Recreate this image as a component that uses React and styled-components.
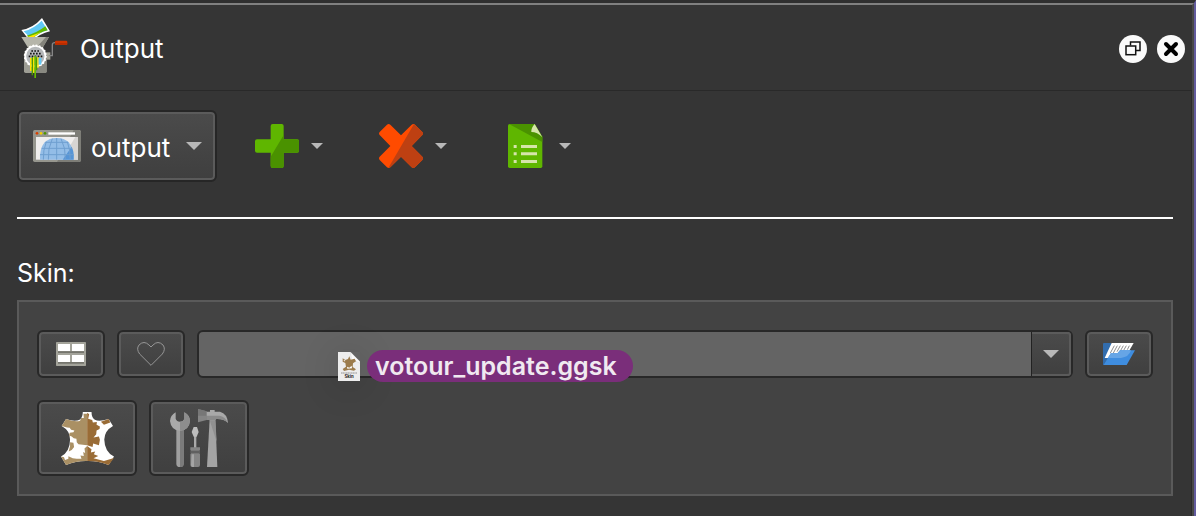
import React, { useState } from "react";
import styled, { createGlobalStyle } from "styled-components";

const GrinderIcon = () => (
  <svg width="48" height="61" viewBox="60 54 144 183" aria-hidden="true">
    <path d="M64 90 Q100 84 126 54 L150 94 Q120 100 92 126 Z" fill="#fff" />
    <path d="M71 94 Q102 86 125 62 L143 91 Q118 97 95 118 Z" fill="#60c8f5" />
    <path d="M80 107 Q112 98 136 79 L143 91 Q116 97 95 118 Z" fill="#64b900" />
    <path d="M84 110 Q104 104 124 96 Q108 104 95 118 Z" fill="#ffe600" />
    <rect x="136" y="157" width="15" height="22" fill="#a3a398" />
    <path d="M146 167 H157 V134 Q157 128 165 128" fill="none" stroke="#858585" strokeWidth="4" />
    <rect x="165" y="122" width="37" height="13" rx="4" fill="#cf3300" />
    <rect x="165" y="129" width="37" height="6" rx="3" fill="#b92d00" />
    <path d="M72 158 H140 V214 Q140 219 135 219 H77 Q72 219 72 214 Z" fill="#9d9d94" />
    <path d="M106 158 H140 V214 Q140 219 135 219 H106 Z" fill="#898981" />
    <path d="M64 111 H147 L126 146 H86 Z" fill="#b5b5aa" />
    <path d="M138 111 H147 L126 146 H106 Z" fill="#83837b" />
    <circle cx="106" cy="168" r="30" fill="#b5b8ba" stroke="#fff" strokeWidth="5" />
    <circle cx="106" cy="168" r="32" fill="none" stroke="#fff" strokeWidth="5" strokeDasharray="5 5.05" />
    <g stroke="#151515" strokeWidth="5" strokeDasharray="5 4">
      <path d="M94 153 H119" />
      <path d="M90 161 H124" />
      <path d="M86 169 H128" />
    </g>
    <path d="M90 174 H95 V213 H90 Z" fill="#ffe600" />
    <path d="M95 172 H99 V226 H95 Z" fill="#4d9a00" />
    <path d="M99 172 H103 V218 H99 Z" fill="#ffe600" />
    <path d="M103 167 H108 V234 H103 Z" fill="#64b900" />
    <path d="M108 172 H112 V211 H108 Z" fill="#4d9a00" />
    <path d="M112 172 H116 V203 H112 Z" fill="#ffe600" />
    <path d="M116 174 H124 V194 H116 Z" fill="#60c8f5" />
  </svg>
);

const FloatIcon = () => (
  <svg width="16" height="15" viewBox="0 0 16 15" fill="none" stroke="#111" strokeWidth="1.5" aria-hidden="true">
    <path d="M5.5 4.5 V1 H15 V9.5 H11" />
    <rect x="1" y="5" width="9.7" height="8.7" />
  </svg>
);

const CloseIcon = () => (
  <svg width="16" height="16" viewBox="0 0 16 16" fill="none" stroke="#000" strokeWidth="4" strokeLinecap="round" aria-hidden="true">
    <path d="M3 3 L13 13 M13 3 L3 13" />
  </svg>
);

const WebIcon = () => (
  <svg width="48" height="32" viewBox="0 0 144 96" aria-hidden="true">
    <rect width="144" height="96" rx="5" fill="#96968e" />
    <path d="M139 0 L144 5 V91 L139 96 H72 L122 0 Z" fill="#7d7d77" />
    <rect x="9" y="21" width="126" height="68" fill="#f0eeed" />
    <path d="M135 21 V89 H86 L127 21 Z" fill="#d7d5d3" />
    <path d="M21 89 V76 Q25 24 71 24 Q117 24 122 76 V89 Z" fill="#93bde7" />
    <path d="M116 50 Q122 62 122 76 V89 H89 Z" fill="#5795d6" />
    <g fill="none" stroke="#6f9fd0" strokeWidth="3">
      <path d="M71 24 V89 M26 55 H117 M21 74 H122 M37 37 H106" />
      <path d="M58 26 Q44 55 46 89 M84 26 Q99 55 97 89 M40 35 Q30 60 31 89 M103 35 Q112 60 112 89" />
    </g>
    <path d="M46 7 H126 V14 H46 Z" fill="#fff" />
    <circle cx="12" cy="10" r="4" fill="#d83f00" />
    <circle cx="24" cy="10" r="4" fill="#f3cf00" />
    <circle cx="36" cy="10" r="4" fill="#4d9500" />
  </svg>
);

const AddIcon = () => (
  <svg width="44" height="44" viewBox="0 0 132 132" aria-hidden="true">
    <path
      d="M53 0 H80 Q86 0 86 6 V46 H126 Q132 46 132 52 V80 Q132 86 126 86 H86 V126 Q86 132 80 132 H53 Q47 132 47 126 V86 H6 Q0 86 0 80 V52 Q0 46 6 46 H47 V6 Q47 0 53 0 Z"
      fill="#5fb600"
    />
    <path d="M86 33 V46 H126 Q132 46 132 52 V80 Q132 86 126 86 H86 V126 Q86 132 80 132 H53 Q47 132 47 126 V98 Z" fill="#4a9200" />
  </svg>
);

const RemoveIcon = () => (
  <svg width="44" height="44" viewBox="0 0 132 132" aria-hidden="true">
    <path
      d="M2 24 L24 2 Q29 -2 34 2 L66 34 L98 2 Q103 -2 108 2 L130 24 Q134 28 130 33 L98 66 L130 98 Q134 103 130 108 L108 130 Q103 134 98 130 L66 98 L34 130 Q29 134 24 130 L2 108 Q-2 103 2 98 L34 66 L2 33 Q-2 28 2 24 Z"
      fill="#ff4b00"
    />
    <path d="M105 0 L130 24 Q134 28 130 33 L98 66 L130 98 Q134 103 130 108 L108 130 Q103 134 98 130 L66 98 L34 130 L28 132 Z" fill="#be4012" />
  </svg>
);

const TemplateIcon = () => (
  <svg width="44" height="44" viewBox="-15 0 132 132" aria-hidden="true">
    <path d="M5 0 H80 L103 38 V127 Q103 132 98 132 H5 Q0 132 0 127 V5 Q0 0 5 0 Z" fill="#5fb600" />
    <path d="M3 0 H80 L103 38 V54 Z" fill="#4a9200" />
    <path d="M80 0 L103 40 Q88 24 70 24 Q69 12 80 0 Z" fill="#d6e5aa" />
    <g fill="#d6e5aa">
      <path d="M17 63 H26 V72 H17 Z M39 63 H87 V72 H39 Z" />
      <path d="M17 85 H26 V94 H17 Z M39 85 H87 V94 H39 Z" />
      <path d="M17 108 H26 V117 H17 Z M39 108 H87 V117 H39 Z" />
    </g>
  </svg>
);

const GridIcon = () => (
  <svg width="30" height="24" viewBox="0 0 90 72" aria-hidden="true">
    <rect width="90" height="72" rx="2" fill="#a3a39a" />
    <path d="M6 28 H84 V33 H6 Z M6 60 H84 V65 H6 Z" fill="#75756d" />
    <path d="M6 6 H42 V27 H6 Z M48 6 H84 V27 H48 Z M6 39 H42 V60 H6 Z M48 39 H84 V60 H48 Z" fill="#fff" />
  </svg>
);

const HeartIcon = () => (
  <svg width="28" height="24" viewBox="0 0 84 72" fill="none" stroke="#969696" strokeWidth="3" aria-hidden="true">
    <path d="M42 70 L8 36 Q-3 21 6 9 Q21 -6 36 9 L42 15 L48 9 Q63 -6 78 9 Q87 21 76 36 Z" />
  </svg>
);

const FolderIcon = () => (
  <svg width="32" height="22" viewBox="0 0 96 66" aria-hidden="true">
    <path d="M0 2 Q0 0 3 0 H23 L28 6 V50 L4 66 H0 Z" fill="#326dae" />
    <path d="M26 0 H92 L66 45 H5 Z" fill="#fff" />
    <g stroke="#777" strokeWidth="2.5">
      <path d="M34 8 L22 30 M43 8 L31 30 M52 8 L42 26 M61 8 L52 24 M70 8 L62 22 M79 8 L73 20" />
    </g>
    <path d="M24 30 H44 L51 22 H96 L71 66 H2 Z" fill="#3f8ddf" />
    <path d="M24 30 H44 L51 22 H84 Q78 42 54 45 H14 Z" fill="#66a5e6" />
  </svg>
);

const hide = "M15 21 Q42 31 57 22 Q65 15 65 0 H91 Q91 17 101 23 Q113 30 142 21 L155 42 Q130 56 129 82 Q130 119 158 133 L142 158 Q110 145 78 146 Q46 145 15 158 L0 133 Q27 118 27 82 Q27 56 2 42 Z";

const HideIcon = () => (
  <svg width="53" height="53" viewBox="0 0 158 158" aria-hidden="true">
    <path d={hide} fill="#fff" />
    <path d="M15 21 Q43 31 57 26 L60 18 L68 18 L67 5 H78 V99 L65 98 L52 96 L47 90 L46 80 L38 78 L32 73 L24 70 L26 62 L37 60 L40 55 L30 53 L26 47 L18 46 L2 42 Z" fill="#aa9064" />
    <path d="M27 90 L37 92 L39 104 L32 113 L23 118 L27 101 Z" fill="#aa9064" />
    <path d="M0 133 L9 135 L12 143 L22 139 L22 132 L35 138 L47 139 L61 139 L58 130 L68 131 L66 119 L72 122 L70 109 L78 101 V146 Q46 145 15 158 Z" fill="#aa9064" />
    <path d="M78 2 L84 7 L81 20 L93 24 L95 31 L107 30 L106 38 L116 43 L115 51 L106 55 L105 66 L97 76 L113 73 L116 83 L113 99 L96 94 L94 104 L78 99 Z" fill="#9a6c36" />
    <path d="M78 101 L91 111 L89 121 L102 118 L98 126 L111 131 L97 138 L128 146 L158 137 L142 158 Q110 145 78 146 Z" fill="#9a6c36" />
    <path d="M119 29 L142 21 L147 31 L128 38 Z" fill="#9a6c36" />
  </svg>
);

const ToolsIcon = () => (
  <svg width="58" height="58" viewBox="0 0 174 174" aria-hidden="true">
    <path d="M19 52 H41 V164 Q41 174 30 174 Q19 174 19 164 Z" fill="#9f9f9f" />
    <path d="M30 52 H41 V164 Q41 174 30 174 Z" fill="#7b7b7b" />
    <path d="M17 10 V29 Q20 38 30 38 Q40 38 43 29 V10 Q60 20 60 36 Q57 64 30 65 Q3 64 0 36 Q1 19 17 10 Z" fill="#aaa" />
    <path d="M43 10 Q60 20 60 36 Q57 64 30 65 V38 Q40 38 43 29 Z" fill="#8d8d8d" />
    <path d="M72 78 H79 V117 H72 Z" fill="#aaa" />
    <path d="M71 54 H81 L86 69 L80 83 H71 L65 69 Z" fill="#bdbdbd" />
    <path d="M61 115 H90 V123 Q84 128 90 136 V168 Q90 174 84 174 H67 Q61 174 61 168 V136 Q67 128 61 123 Z" fill="#858585" />
    <path d="M61 125 H90 V133 H61 Z" fill="#606060" />
    <path d="M65 136 H72 V174 H67 Q63 173 63 168 Z" fill="#a5a5a5" />
    <path d="M119 30 H136 L142 174 H111 Z" fill="#a4a4a4" />
    <path d="M119 34 H136 L140 98 Z" fill="#919191" />
    <path d="M84 0 L110 7 V33 L84 40 Z" fill="#858585" />
    <path d="M84 0 L110 7 V20 H84 Z" fill="#777" />
    <path d="M110 8 H120 V3 H134 V8 H150 Q172 14 174 42 Q162 29 139 30 L134 33 H110 Z" fill="#a9a9a9" />
    <path d="M110 20 H148 Q166 23 174 42 Q162 29 139 30 L134 33 H110 Z" fill="#8b8b8b" />
  </svg>
);

const SkinFileIcon = () => (
  <svg width="22" height="29" viewBox="0 0 66 87" aria-hidden="true">
    <path d="M0 0 H37 L66 29 V87 H0 Z" fill="#ededed" />
    <path d="M37 0 Q42 20 39 27 Q54 24 66 34 V29 Z" fill="#fafafa" stroke="#ccc" strokeWidth="1" />
    <path d="M14 19 L22 24 L30 21 L34 13 L38 23 L50 20 L54 28 L45 34 L44 45 L54 52 L48 56 L33 53 L18 57 L14 51 L24 44 L22 33 L14 29 Z" fill="#9b7b4b" />
    <path d="M27 44 L34 47 L41 41 L42 49 L28 50 Z M17 23 L23 27 L18 28 Z" fill="#fff" />
    <path d="M9 63 H57" stroke="#666" strokeWidth="2" strokeDasharray="4 1" />
    <text x="33" y="79" textAnchor="middle" fontFamily="Inter, sans-serif" fontSize="13" fontWeight="700" fill="#222">Skin</text>
  </svg>
);

const Caret = ({ size = 12 }) => (
  <svg width={size} height={size / 2} viewBox="0 0 12 6" aria-hidden="true">
    <path d="M0 0 H12 L6 6 Z" fill="#b8b8b8" />
  </svg>
);

const App = () => {
  const [skin, setSkin] = useState("");

  return (
    <Frame>
      <GlobalStyle />
      <Dock>
        <Header>
          <GrinderIcon />
          <Title>Output</Title>
          <RoundButton aria-label="Float panel"><FloatIcon /></RoundButton>
          <RoundButton aria-label="Close panel"><CloseIcon /></RoundButton>
        </Header>
        <Content>
          <Toolbar>
            <OutputPicker>
              <WebIcon />
              <select name="output" aria-label="Output format" defaultValue="output">
                <option value="output">output</option>
              </select>
              <Caret size={16} />
            </OutputPicker>
            <ToolButton aria-label="Add output"><AddIcon /><Caret /></ToolButton>
            <ToolButton aria-label="Remove output"><RemoveIcon /><Caret /></ToolButton>
            <ToolButton aria-label="Templates"><TemplateIcon /><Caret /></ToolButton>
          </Toolbar>
          <Divider />
          <Label htmlFor="skin">Skin:</Label>
          <Panel>
            <Row>
              <FrameButton aria-label="Browse skins"><GridIcon /></FrameButton>
              <FrameButton aria-label="Favourite skins"><HeartIcon /></FrameButton>
              <SkinField>
                <input id="skin" name="skin" type="text" value={skin} onChange={(e) => setSkin(e.target.value)} />
                <button aria-label="Show skins"><Caret size={16} /></button>
                <DraggedFile>
                  <SkinFileIcon />
                  <FileName>votour_update.ggsk</FileName>
                </DraggedFile>
              </SkinField>
              <FrameButton aria-label="Open skin file"><FolderIcon /></FrameButton>
            </Row>
            <Row>
              <FrameButton $large aria-label="Edit skin"><HideIcon /></FrameButton>
              <FrameButton $large aria-label="Skin tools"><ToolsIcon /></FrameButton>
            </Row>
          </Panel>
        </Content>
      </Dock>
    </Frame>
  );
};

const GlobalStyle = createGlobalStyle`
  *{
    box-sizing:border-box;
  }
  body{
    margin:0;
    background:#353535;
    color:#fff;
    font-family:Inter, "Liberation Sans", sans-serif;
    font-size:25px;
  }
  button,input,select{
    font:inherit;
    color:inherit;
    margin:0;
    padding:0;
    border:0;
    background:none;
  }
  svg{
    display:block;
    flex:none;
  }
`;

const Frame = styled.div`
  min-height: 100vh;
  display: flex;
  border-top: 3px solid #2f2f2f;
  border-right: 2px solid #625b9e;
`;

const Dock = styled.section`
  flex: 1;
  min-width: 0;
  border-top: 2px solid #808080;
  border-right: 2px solid #484848;
`;

const Header = styled.header`
  display: flex;
  align-items: center;
  gap: 10px;
  height: 86px;
  padding: 2px 7px 0 20px;
  border-bottom: 1px solid #292929;
`;

const Title = styled.h1`
  flex: 1;
  margin: 0 0 0 2px;
  font-size: 26px;
  font-weight: 400;
  line-height: 30px;
`;

const RoundButton = styled.button`
  display: flex;
  align-items: center;
  justify-content: center;
  width: 28px;
  height: 28px;
  border-radius: 50%;
  background: #fafafa;
`;

const Content = styled.div`
  padding: 19px 18px 20px 17px;
  border-right: 1px solid #2b2b2b;
`;

const Toolbar = styled.div`
  display: flex;
  align-items: center;
`;

const OutputPicker = styled.div`
  display: flex;
  align-items: center;
  gap: 10px;
  width: 200px;
  height: 72px;
  padding: 0 13px 0 14px;
  border: 2px solid #262626;
  border-radius: 6px;
  background: linear-gradient(#4b4b4b, #3f3f3f);
  box-shadow: inset 0 0 0 2px #5b5b5b;
  select{
    flex:1;
    min-width:0;
    height:40px;
    padding-top:2px;
    font-size:26px;
    appearance:none;
  }
`;

const ToolButton = styled.button`
  display: flex;
  align-items: center;
  gap: 12px;
  margin-left: 38px;
  & + &{
    margin-left:56px;
  }
`;

const Divider = styled.hr`
  height: 2px;
  margin: 35px 0 39px;
  border: 0;
  background: #fff;
`;

const Label = styled.label`
  display: block;
  line-height: 30px;
`;

const Panel = styled.div`
  display: flex;
  flex-direction: column;
  gap: 22px;
  margin-top: 12px;
  padding: 28px 18px 18px;
  border: 2px solid #5a5a5a;
  background: #434343;
`;

const Row = styled.div`
  display: flex;
  gap: 12px;
`;

const FrameButton = styled.button`
  display: flex;
  align-items: center;
  justify-content: center;
  width: ${({ $large }) => ($large ? "100px" : "68px")};
  height: ${({ $large }) => ($large ? "76px" : "48px")};
  border: 2px solid #282828;
  border-radius: 6px;
  background: linear-gradient(#4b4b4b, #3f3f3f);
  box-shadow: inset 0 0 0 2px #5b5b5b;
`;

const SkinField = styled.div`
  position: relative;
  display: flex;
  flex: 1;
  height: 48px;
  border: 2px solid #282828;
  border-radius: 6px;
  background: #646464;
  input{
    flex:1;
    min-width:0;
    padding:0 8px;
  }
  button{
    display:flex;
    align-items:center;
    justify-content:center;
    width:40px;
    padding-right:2px;
    border-left:1px solid #222;
    border-radius:0 4px 4px 0;
    background:linear-gradient(#4b4b4b, #3f3f3f);
    box-shadow:inset -2px 0 #5b5b5b, inset 0 2px #5b5b5b, inset 0 -2px #5b5b5b;
  }
`;

const DraggedFile = styled.div`
  position: absolute;
  top: 18px;
  left: 139px;
  display: flex;
  align-items: center;
  gap: 7px;
  pointer-events: none;
  svg{
    box-shadow:0 4px 32px 8px rgba(0,0,0,0.08);
  }
`;

const FileName = styled.span`
  position: relative;
  padding: 0 16px 0 8px;
  border-radius: 16px;
  background: #7a2e7a;
  color: #f0e9f0;
  font-weight: 600;
  line-height: 32px;
`;

export default App;
